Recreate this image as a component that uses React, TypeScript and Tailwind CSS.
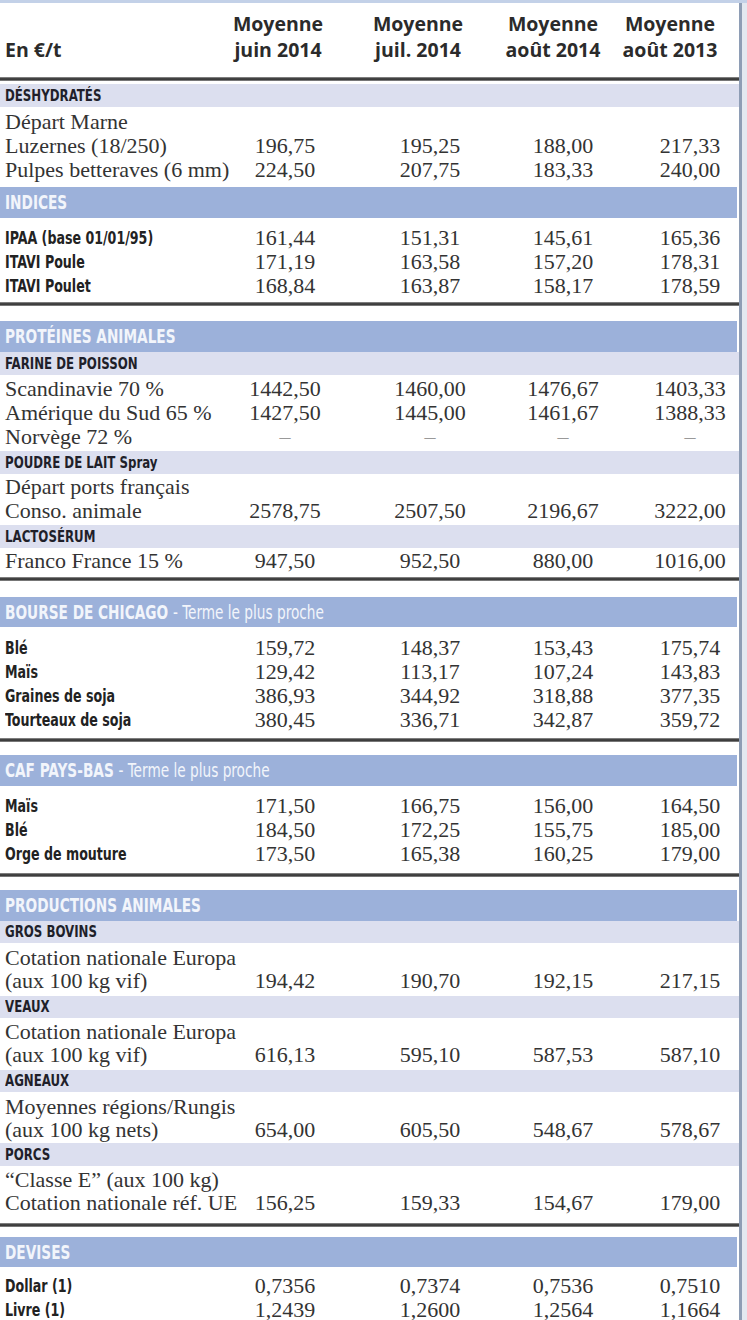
import React from "react";

const serif = "font-['Liberation_Serif','Times_New_Roman',serif]";
const narrow =
  "font-['Liberation_Sans_Narrow','DejaVu_Sans_Condensed','Arial_Narrow','Liberation_Sans',sans-serif]";
const sans = "font-['Open_Sans','Liberation_Sans',sans-serif]";

const cellMargins = ["", "ml-[49px]", "ml-[37px]", "ml-[31px]"];

type RowData = { label: string; vals?: string[] };

function DarkLine({ className = "" }: { className?: string }) {
  return (
    <div
      className={`h-[4px] bg-[linear-gradient(to_bottom,#9a9a9a,#3d3d3d_40%,#3d3d3d_70%,#a0a0a0)] ${className}`}
    />
  );
}

function MainBand({
  title,
  sub,
  className = "",
}: {
  title: string;
  sub?: string;
  className?: string;
}) {
  return (
    <div
      className={`mr-[2px] flex items-center overflow-hidden whitespace-nowrap bg-[#9cb1da] pl-[5px] text-[19px] text-[#f2f5fb] ${narrow} ${className}`}
    >
      <span className="inline-block origin-left scale-x-[0.8]">
        <span className="font-bold">{title}</span>
        {sub && <span className="ml-[6px]">- {sub}</span>}
      </span>
    </div>
  );
}

function SubBand({ title, className = "" }: { title: string; className?: string }) {
  return (
    <div
      className={`flex items-center whitespace-nowrap bg-[#dcdfef] pl-[5px] text-[16px] font-bold text-[#1f1f2a] ${narrow} ${className}`}
    >
      <span className="inline-block origin-left scale-x-[0.82]">{title}</span>
    </div>
  );
}

function Rows({
  rows,
  bold = false,
  h = "h-[24px]",
  className = "",
}: {
  rows: RowData[];
  bold?: boolean;
  h?: string;
  className?: string;
}) {
  return (
    <div className={className}>
      {rows.map((r, i) => (
        <div key={i} className={`flex ${h} items-center text-[#333]`}>
          <div
            className={`w-[237px] shrink-0 whitespace-nowrap pl-[5px] ${
              bold ? `${narrow} text-[18px] font-bold text-[#222]` : `${serif} text-[22px]`
            }`}
          >
            {bold ? (
              <span className="inline-block origin-left scale-x-[0.78]">{r.label}</span>
            ) : (
              r.label
            )}
          </div>
          {r.vals &&
            r.vals.map((v, j) => (
              <div
                key={j}
                className={`w-[96px] shrink-0 whitespace-nowrap text-center ${serif} text-[22px] ${
                  cellMargins[j]
                } ${v === "–" ? "text-[#999]" : ""}`}
              >
                {v}
              </div>
            ))}
        </div>
      ))}
    </div>
  );
}

const headerCols = [
  ["Moyenne", "juin 2014"],
  ["Moyenne", "juil. 2014"],
  ["Moyenne", "août 2014"],
  ["Moyenne", "août 2013"],
];
const headerMargins = ["", "ml-[40px]", "ml-[35px]", "ml-[17px]"];

export default function App() {
  return (
    <div className="flex w-[747px] border-t-[3px] border-[#c3d1e8] bg-white">
      <div className="w-[739px] shrink-0">
        {/* header */}
        <div className={`flex h-[74px] pt-[8px] text-[19.5px] font-bold leading-[26px] text-[#2b2b2b] ${sans}`}>
          <div className="w-[228px] shrink-0 pl-[5px] pt-[26px]">En €/t</div>
          {headerCols.map((c, i) => (
            <div key={i} className={`w-[100px] shrink-0 text-center ${headerMargins[i]}`}>
              <div>{c[0]}</div>
              <div>{c[1]}</div>
            </div>
          ))}
        </div>
        <DarkLine />

        <SubBand title="DÉSHYDRATÉS" className="mt-[3px] h-[23px]" />
        <Rows
          className="mt-[2px]"
          rows={[
            { label: "Départ Marne" },
            { label: "Luzernes (18/250)", vals: ["196,75", "195,25", "188,00", "217,33"] },
            { label: "Pulpes betteraves (6 mm)", vals: ["224,50", "207,75", "183,33", "240,00"] },
          ]}
        />

        <MainBand title="INDICES" className="mt-[6px] h-[31px]" />
        <Rows
          bold
          className="mt-[7px]"
          rows={[
            { label: "IPAA (base 01/01/95)", vals: ["161,44", "151,31", "145,61", "165,36"] },
            { label: "ITAVI Poule", vals: ["171,19", "163,58", "157,20", "178,31"] },
            { label: "ITAVI Poulet", vals: ["168,84", "163,87", "158,17", "178,59"] },
          ]}
        />
        <DarkLine className="mt-[5px]" />

        <MainBand title="PROTÉINES ANIMALES" className="mt-[15px] h-[31px]" />
        <SubBand title="FARINE DE POISSON" className="h-[23px]" />
        <Rows
          className="mt-[1px]"
          rows={[
            { label: "Scandinavie 70 %", vals: ["1442,50", "1460,00", "1476,67", "1403,33"] },
            { label: "Amérique du Sud 65 %", vals: ["1427,50", "1445,00", "1461,67", "1388,33"] },
            { label: "Norvège 72 %", vals: ["–", "–", "–", "–"] },
          ]}
        />
        <SubBand title="POUDRE DE LAIT Spray" className="mt-[3px] h-[23px]" />
        <Rows
          rows={[
            { label: "Départ ports français" },
            { label: "Conso. animale", vals: ["2578,75", "2507,50", "2196,67", "3222,00"] },
          ]}
        />
        <SubBand title="LACTOSÉRUM" className="mt-[3px] h-[23px]" />
        <Rows rows={[{ label: "Franco France 15 %", vals: ["947,50", "952,50", "880,00", "1016,00"] }]} />
        <DarkLine className="mt-[5px]" />

        <MainBand title="BOURSE DE CHICAGO" sub="Terme le plus proche" className="mt-[16px] h-[30px]" />
        <Rows
          bold
          className="mt-[8px]"
          rows={[
            { label: "Blé", vals: ["159,72", "148,37", "153,43", "175,74"] },
            { label: "Maïs", vals: ["129,42", "113,17", "107,24", "143,83"] },
            { label: "Graines de soja", vals: ["386,93", "344,92", "318,88", "377,35"] },
            { label: "Tourteaux de soja", vals: ["380,45", "336,71", "342,87", "359,72"] },
          ]}
        />
        <DarkLine className="mt-[7px]" />

        <MainBand title="CAF PAYS-BAS" sub="Terme le plus proche" className="mt-[13px] h-[31px]" />
        <Rows
          bold
          className="mt-[7px]"
          rows={[
            { label: "Maïs", vals: ["171,50", "166,75", "156,00", "164,50"] },
            { label: "Blé", vals: ["184,50", "172,25", "155,75", "185,00"] },
            { label: "Orge de mouture", vals: ["173,50", "165,38", "160,25", "179,00"] },
          ]}
        />
        <DarkLine className="mt-[8px]" />

        <MainBand title="PRODUCTIONS ANIMALES" className="mt-[13px] h-[31px]" />
        <SubBand title="GROS BOVINS" className="h-[22px]" />
        <Rows
          h="h-[23px]"
          className="mt-[3px]"
          rows={[
            { label: "Cotation nationale Europa" },
            { label: "(aux 100 kg vif)", vals: ["194,42", "190,70", "192,15", "217,15"] },
          ]}
        />
        <SubBand title="VEAUX" className="mt-[4px] h-[22px]" />
        <Rows
          h="h-[23px]"
          className="mt-[2px]"
          rows={[
            { label: "Cotation nationale Europa" },
            { label: "(aux 100 kg vif)", vals: ["616,13", "595,10", "587,53", "587,10"] },
          ]}
        />
        <SubBand title="AGNEAUX" className="mt-[4px] h-[22px]" />
        <Rows
          h="h-[23px]"
          className="mt-[3px]"
          rows={[
            { label: "Moyennes régions/Rungis" },
            { label: "(aux 100 kg nets)", vals: ["654,00", "605,50", "548,67", "578,67"] },
          ]}
        />
        <SubBand title="PORCS" className="mt-[2px] h-[23px]" />
        <Rows
          h="h-[23px]"
          className="mt-[2px]"
          rows={[
            { label: "“Classe E” (aux 100 kg)" },
            { label: "Cotation nationale réf. UE", vals: ["156,25", "159,33", "154,67", "179,00"] },
          ]}
        />
        <DarkLine className="mt-[9px]" />

        <MainBand title="DEVISES" className="mt-[10px] h-[30px]" />
        <Rows
          bold
          className="mt-[6px]"
          rows={[
            { label: "Dollar (1)", vals: ["0,7356", "0,7374", "0,7536", "0,7510"] },
            { label: "Livre (1)", vals: ["1,2439", "1,2600", "1,2564", "1,1664"] },
          ]}
        />
      </div>
      <div className="w-[3px] shrink-0 bg-[#8e9db5]" />
      <div className="flex-1 bg-[#e3e8f0]" />
    </div>
  );
}
